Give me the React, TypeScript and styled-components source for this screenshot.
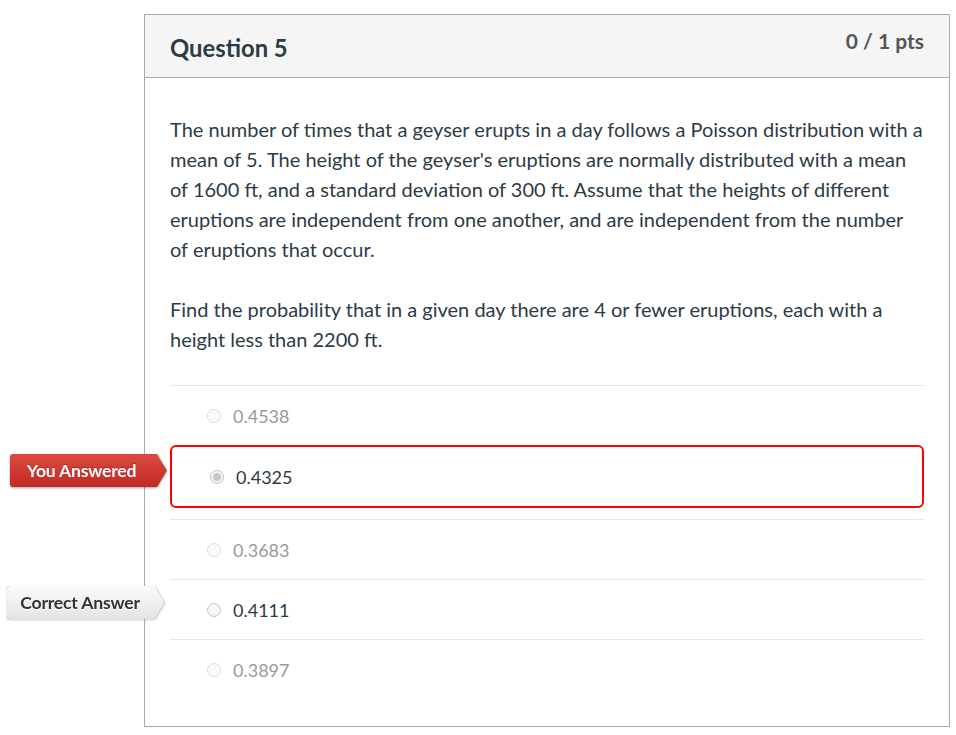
import React from "react";
import styled, { createGlobalStyle } from "styled-components";

const Global = createGlobalStyle`
  html, body { margin: 0; padding: 0; background: #fff; }
  body { font-family: Lato, "Open Sans", "Liberation Sans", sans-serif; color: #2d3b45; }
  * { box-sizing: border-box; }
`;

const Page = styled.div`
  padding: 14px 0 0 144px;
`;

const Card = styled.section`
  width: 806px;
  border: 1px solid #aaaaaa;
  background: #fff;
`;

const Header = styled.header`
  display: flex;
  justify-content: space-between;
  align-items: flex-start;
  height: 63px;
  padding: 18px 25px 0 25px;
  background: #f5f5f5;
  border-bottom: 1px solid #aaaaaa;
`;

const Title = styled.h2`
  margin: 0;
  font-size: 23.8px;
  line-height: 30px;
  font-weight: 700;
  color: #2d3b45;
`;

const Points = styled.div`
  margin-top: -3px;
  font-size: 21px;
  line-height: 22px;
  font-weight: 700;
  color: #555;
`;

const Body = styled.div`
  padding: 36px 25px 27px 25px;
`;

const Para = styled.p`
  margin: 0 0 30px 0;
  font-size: 20px;
  line-height: 30px;
  color: #2d3b45;
  &:last-of-type { margin-bottom: 0; }
`;

const Answers = styled.div`
  margin-top: 31px;
  display: flex;
  flex-direction: column;
`;

const Row = styled.div<{ $wrong?: boolean }>`
  position: relative;
  display: flex;
  align-items: center;
  gap: 12px;
  font-size: 18px;
  ${(p) =>
    p.$wrong
      ? `
    height: 63px;
    padding-left: 38px;
    border: 2px solid #ff0000;
    border-radius: 6px;
    margin-bottom: 11px;
  `
      : `
    height: 60px;
    padding-left: 37px;
    padding-top: 1px;
    border-top: 1px solid #e6e6e6;
  `}
`;

const Radio = styled.span<{ $tone: "faded" | "normal" | "checked" }>`
  display: inline-block;
  width: 14px;
  height: 14px;
  border-radius: 50%;
  flex: none;
  background: ${(p) => (p.$tone === "faded" ? "#fafafa" : "#f6f6f6")};
  border: 1px solid ${(p) => (p.$tone === "faded" ? "#dedede" : "#c4c4c4")};
  position: relative;
  ${(p) =>
    p.$tone === "checked"
      ? `&::after { content: ""; position: absolute; left: 2px; top: 2px; width: 8px; height: 8px; border-radius: 50%; background: #c8c8c8; }`
      : ""}
`;

const AnswerText = styled.span<{ $faded?: boolean }>`
  color: ${(p) => (p.$faded ? "#9a9a9a" : "#2d3b45")};
`;

const TagWrap = styled.div<{ $kind: "wrong" | "correct" }>`
  position: absolute;
  right: calc(100% + 5px);
  top: ${(p) => (p.$kind === "wrong" ? "7px" : "6px")};
  filter: ${(p) =>
    p.$kind === "wrong"
      ? "drop-shadow(0 1px 1px rgba(0,0,0,0.35))"
      : "drop-shadow(0 0 0.6px rgba(0,0,0,0.6)) drop-shadow(0 1px 1px rgba(0,0,0,0.2))"};
`;

const Tag = styled.div<{ $kind: "wrong" | "correct" }>`
  display: flex;
  align-items: center;
  justify-content: center;
  height: 33px;
  width: ${(p) => (p.$kind === "wrong" ? "157px" : "158px")};
  padding-right: ${(p) => (p.$kind === "wrong" ? "14px" : "12px")};
  font-size: 17.6px;
  font-weight: 700;
  letter-spacing: -0.2px;
  white-space: nowrap;
  border-radius: 3px 0 0 3px;
  clip-path: polygon(0 0, calc(100% - 10px) 0, 100% 50%, calc(100% - 10px) 100%, 0 100%);
  color: ${(p) => (p.$kind === "wrong" ? "#fff" : "#333")};
  background: ${(p) =>
    p.$kind === "wrong"
      ? "linear-gradient(#dc4a42, #c02a24)"
      : "linear-gradient(#fbfbfb, #e4e4e4)"};
  text-shadow: ${(p) => (p.$kind === "wrong" ? "0 -1px 0 rgba(0,0,0,0.25)" : "0 1px 0 #fff")};
`;

type Ans = { value: string; state: "faded" | "wrong" | "correct" };

const answers: Ans[] = [
  { value: "0.4538", state: "faded" },
  { value: "0.4325", state: "wrong" },
  { value: "0.3683", state: "faded" },
  { value: "0.4111", state: "correct" },
  { value: "0.3897", state: "faded" },
];

export default function App() {
  return (
    <Page>
      <Global />
      <Card>
        <Header>
          <Title>Question 5</Title>
          <Points>0 / 1 pts</Points>
        </Header>
        <Body>
          <Para>
            The number of times that a geyser erupts in a day follows a Poisson distribution with a
            mean of 5. The height of the geyser's eruptions are normally distributed with a mean
            of 1600 ft, and a standard deviation of 300 ft. Assume that the heights of different
            eruptions are independent from one another, and are independent from the number
            of eruptions that occur.
          </Para>
          <Para>
            Find the probability that in a given day there are 4 or fewer eruptions, each with a
            height less than 2200 ft.
          </Para>
          <Answers>
            {answers.map((a) => (
              <Row key={a.value} $wrong={a.state === "wrong"}>
                {a.state === "wrong" && (
                  <TagWrap $kind="wrong">
                    <Tag $kind="wrong">You Answered</Tag>
                  </TagWrap>
                )}
                {a.state === "correct" && (
                  <TagWrap $kind="correct">
                    <Tag $kind="correct">Correct Answer</Tag>
                  </TagWrap>
                )}
                <Radio
                  $tone={a.state === "faded" ? "faded" : a.state === "wrong" ? "checked" : "normal"}
                />
                <AnswerText $faded={a.state === "faded"}>{a.value}</AnswerText>
              </Row>
            ))}
          </Answers>
        </Body>
      </Card>
    </Page>
  );
}
